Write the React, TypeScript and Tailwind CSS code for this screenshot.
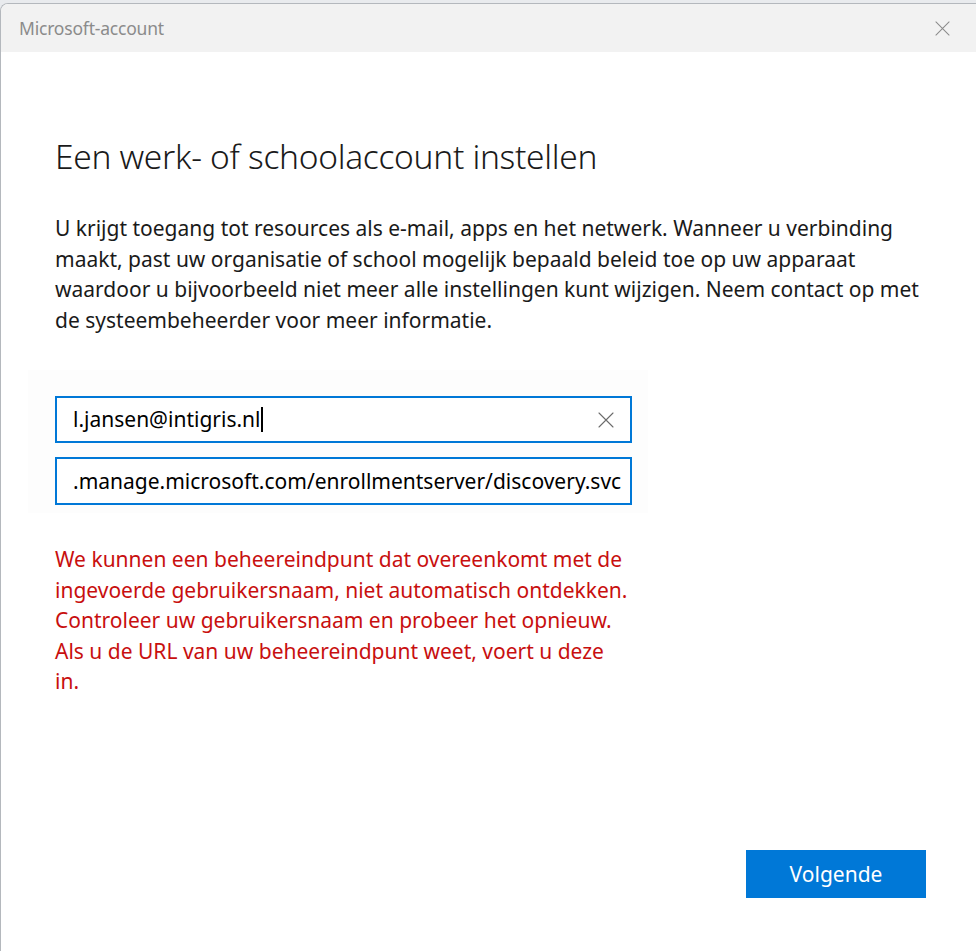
import React from "react";

const font = { fontFamily: '"Noto Sans", "Open Sans", sans-serif' };

function XIcon({ className }: { className?: string }) {
  return (
    <svg viewBox="0 0 16 16" className={className} fill="none" stroke="currentColor" strokeWidth="1.1" strokeLinecap="round">
      <path d="M1 1 L15 15 M15 1 L1 15" />
    </svg>
  );
}

export default function App() {
  return (
    <div className="w-[976px] h-[951px] bg-[#e9ebee] pt-[3px] overflow-hidden" style={font}>
      <div className="h-[960px] w-[990px] rounded-tl-[8px] border-l border-t border-[#b4b8bd] bg-white flex flex-col overflow-hidden">
        <div className="h-[48px] bg-[#f2f2f2] flex items-center pl-[18px] shrink-0">
          <span className="text-[17.5px] text-[#8b8b8b] tracking-[-0.2px]">Microsoft-account</span>
          <div className="flex-1" />
          <XIcon className="w-[15px] h-[15px] text-[#8a8a8a] mr-[40px]" />
        </div>
        <div className="flex flex-col pl-[54px] w-[976px]">
          <h1 className="mt-[84px] text-[33.5px] leading-[40px] font-light text-[#1a1a1a] tracking-[-0.3px] whitespace-nowrap">
            Een werk- of schoolaccount instellen
          </h1>
          <p className="mt-[37px] text-[21px] leading-[30.6px] text-[#1a1a1a] whitespace-nowrap">
            <span className="block">U krijgt toegang tot resources als e-mail, apps en het netwerk. Wanneer u verbinding</span>
            <span className="block">maakt, past uw organisatie of school mogelijk bepaald beleid toe op uw apparaat</span>
            <span className="block">waardoor u bijvoorbeeld niet meer alle instellingen kunt wijzigen. Neem contact op met</span>
            <span className="block">de systeembeheerder voor meer informatie.</span>
          </p>
          <div className="mt-[35px] -ml-[27px] w-[620px] bg-[#fdfdfd] pl-[27px] pt-[26px] pb-[8px] flex flex-col gap-[14px]">
            <div className="w-[577px] h-[47px] border-2 border-[#0078d7] bg-white flex items-center pl-[16px] pr-[16px]">
              <span className="text-[21px] text-black whitespace-nowrap">l.jansen@intigris.nl</span>
              <span className="w-[2px] h-[25px] bg-black ml-[1px]" />
              <div className="flex-1" />
              <XIcon className="w-[16px] h-[16px] text-[#6b6b6b]" />
            </div>
            <div className="w-[577px] h-[48px] border-2 border-[#0078d7] bg-white flex items-center pl-[16px] overflow-hidden">
              <span className="text-[21px] text-black whitespace-nowrap">.manage.microsoft.com/enrollmentserver/discovery.svc</span>
            </div>
          </div>
          <p className="mt-[31px] text-[21px] leading-[30.4px] text-[#c80f0f] whitespace-nowrap">
            <span className="block">We kunnen een beheereindpunt dat overeenkomt met de</span>
            <span className="block">ingevoerde gebruikersnaam, niet automatisch ontdekken.</span>
            <span className="block">Controleer uw gebruikersnaam en probeer het opnieuw.</span>
            <span className="block">Als u de URL van uw beheereindpunt weet, voert u deze</span>
            <span className="block">in.</span>
          </p>
          <div className="mt-[154px] flex justify-end pr-[51px]">
            <button className="w-[180px] h-[48px] bg-[#0078d7] text-white text-[21px]">Volgende</button>
          </div>
        </div>
      </div>
    </div>
  );
}
